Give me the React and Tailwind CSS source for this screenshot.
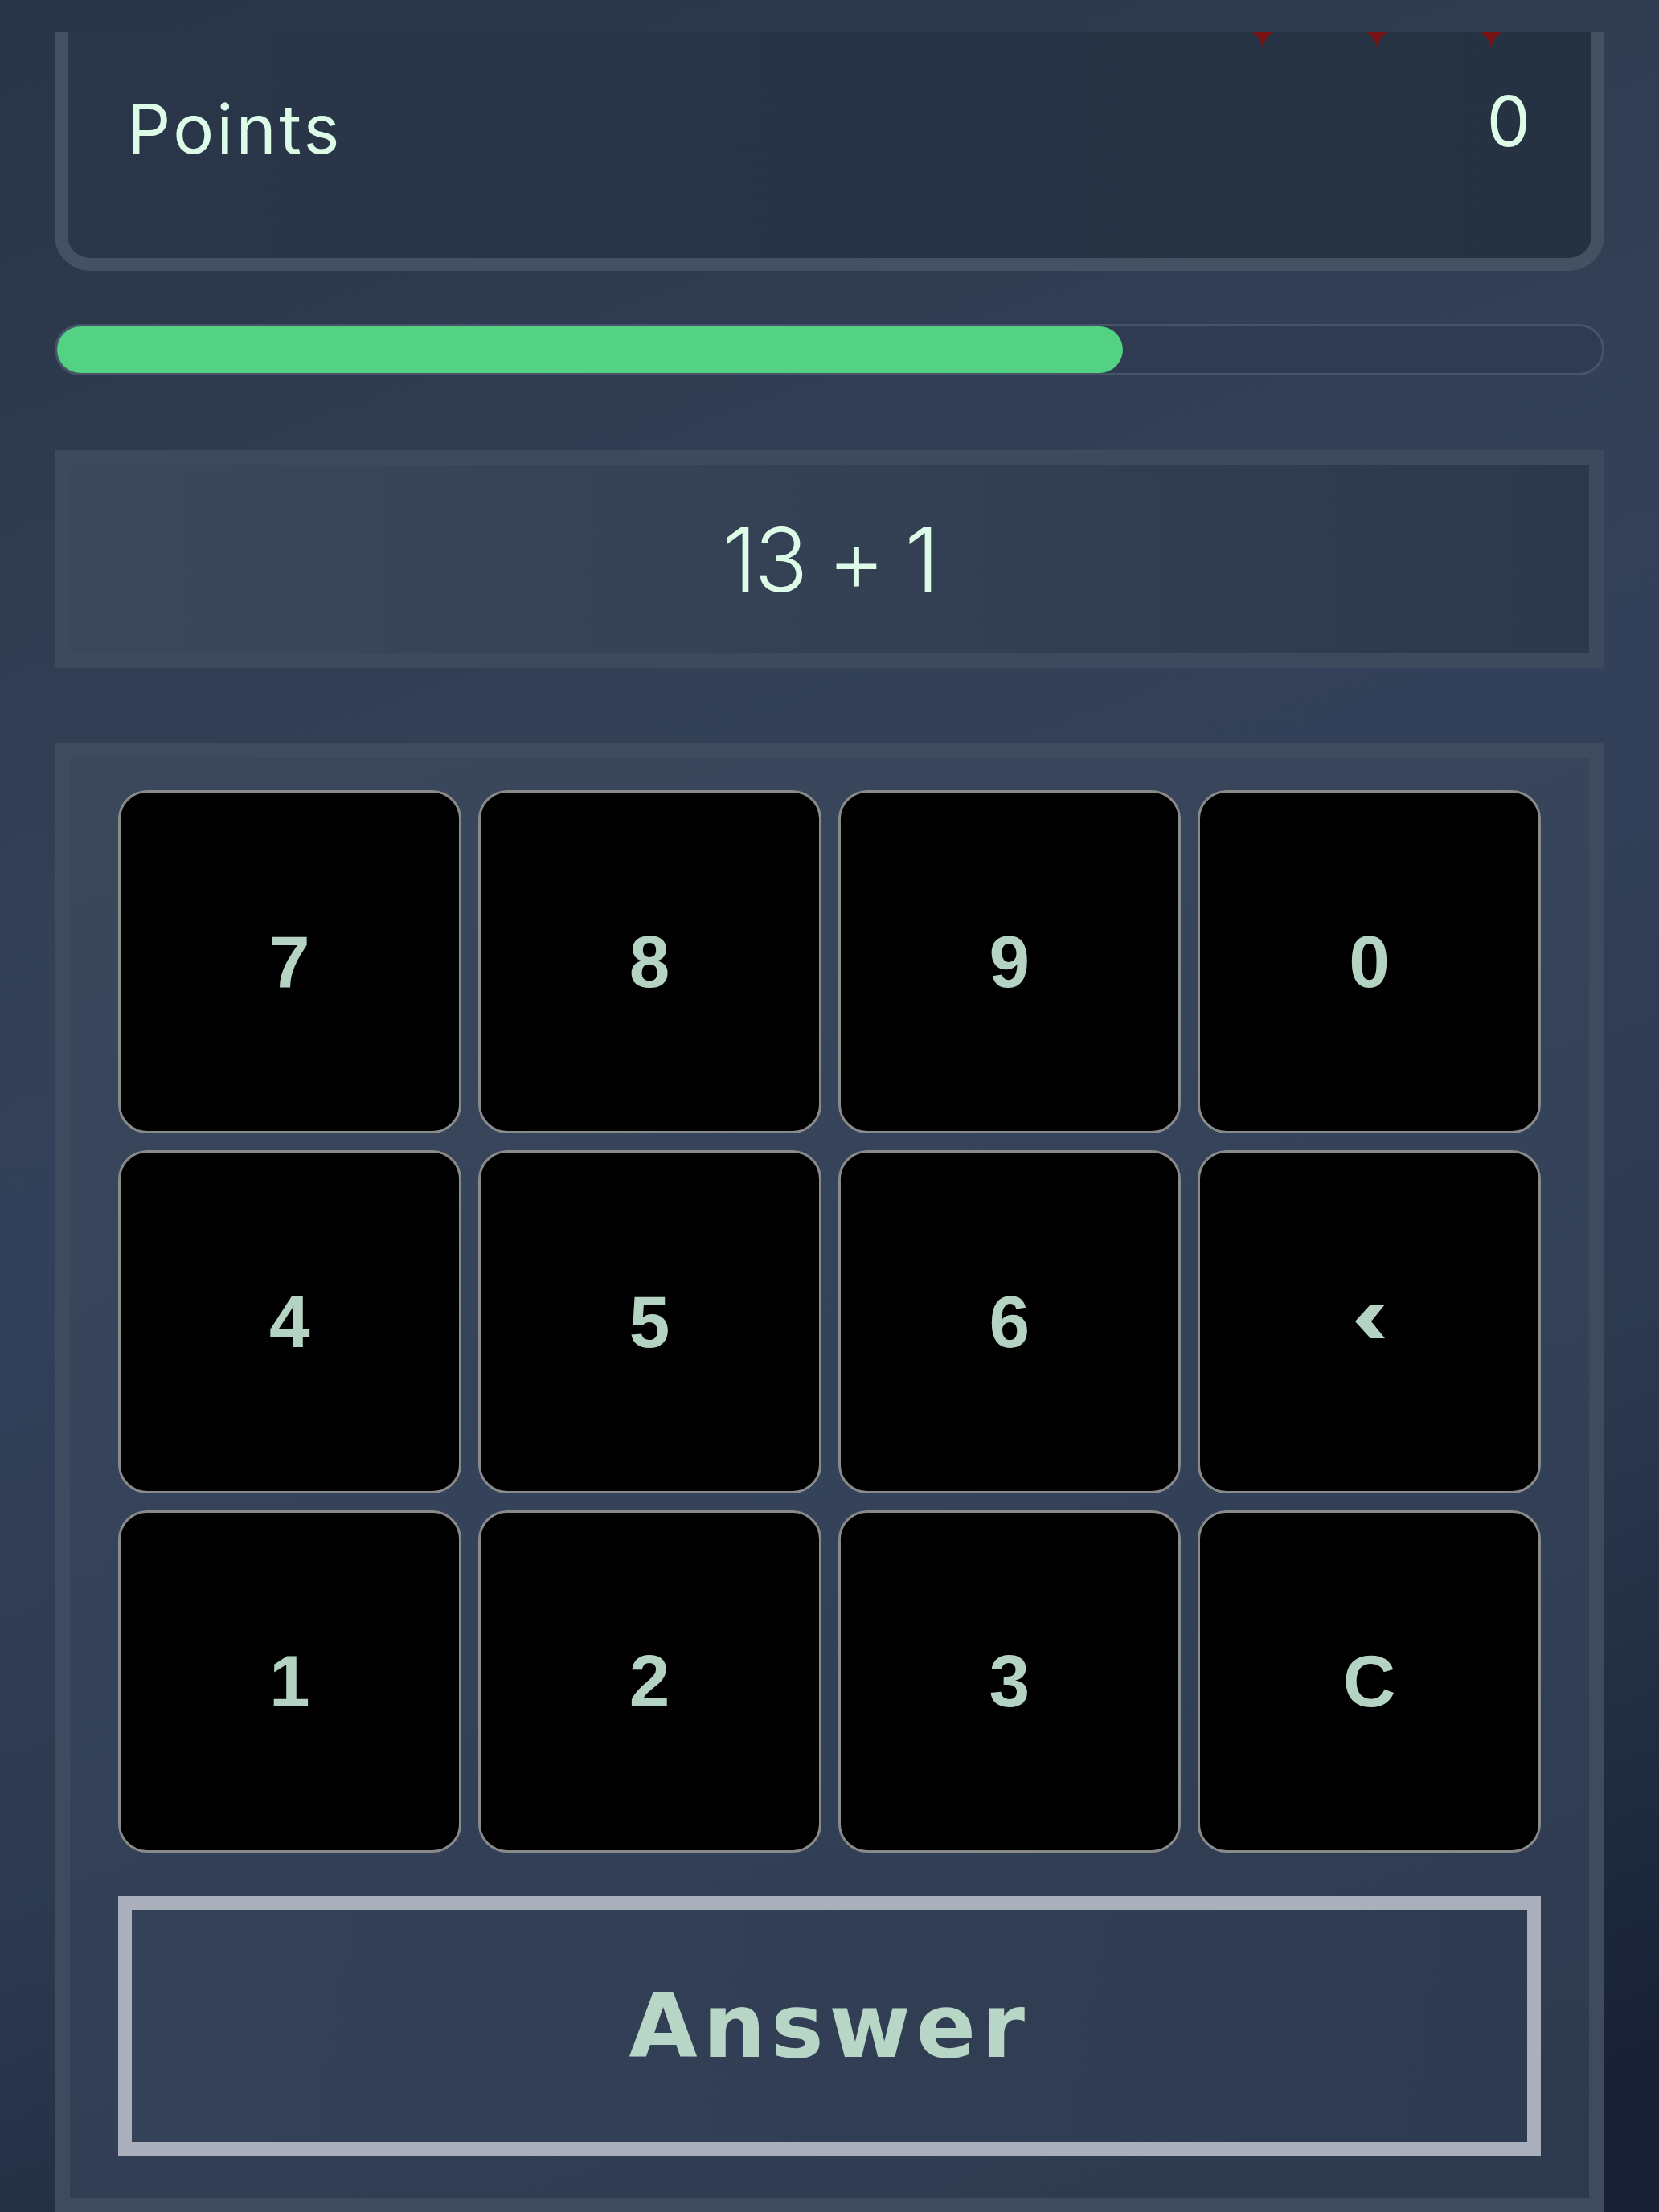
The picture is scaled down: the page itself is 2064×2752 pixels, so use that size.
import React from "react";

const keys = ["7", "8", "9", "0", "4", "5", "6", "back", "1", "2", "3", "C"];

function Tip() {
  return (
    <svg width="26" height="18" viewBox="0 0 26 18" className="block">
      <path d="M0 0 H26 Q16 6 13.5 18 H12.5 Q10 6 0 0 Z" fill="#7a1414" />
    </svg>
  );
}

function Chevron() {
  return (
    <svg width="40" height="42" viewBox="0 0 40 42" className="block">
      <polygon points="21,0 39,0 22,21 39,42 21,42 2,21" fill="#b4d3c2" />
    </svg>
  );
}

export default function App() {
  return (
    <div className="h-[2752px] w-full overflow-hidden bg-[linear-gradient(160deg,#283447_0%,#334157_35%,#33405a_45%,#2c3a50_68%,#182134_95%)] px-[68px] pt-[40px]">
      {/* Points card */}
      <div className="h-[297px] rounded-b-[44px] border-x-[16px] border-b-[16px] border-[#455163] bg-[linear-gradient(90deg,#2a3649,#263142)]">
        <div className="flex justify-end gap-[116px] pr-[112px]">
          <Tip />
          <Tip />
          <Tip />
        </div>
        <div className="mt-[60px] flex items-start justify-between pl-[74px] pr-[76px] font-['Inter',sans-serif] text-[#dcfce7]">
          <span className="text-[85px] leading-none tracking-[0.04em]">Points</span>
          <span className="-mt-[10px] text-[86px] leading-none">0</span>
        </div>
      </div>

      {/* Progress */}
      <div className="mt-[66px] h-[64px] rounded-full border-[3px] border-[#46546a] bg-[#2f3b50]">
        <div className="h-full w-[69%] rounded-full bg-[#52d282]"></div>
      </div>

      {/* Problem */}
      <div className="mt-[93px] flex h-[271px] items-center justify-center border-[19px] border-[#3d4a5e] bg-[linear-gradient(90deg,#3b485c,#2d384c)]">
        <span className="font-['Inter',sans-serif] text-[110px] font-light leading-none tracking-[-0.03em] text-[#dcfce7]">
          13 + 1
        </span>
      </div>

      {/* Keypad */}
      <div className="mt-[93px] border-[19px] border-[#3e4a5e] bg-[linear-gradient(160deg,#3b475b,#34425a_50%,#2d394d)] px-[60px] pb-[52px] pt-[40px]">
        <div className="grid grid-cols-4 gap-[21px]">
          {keys.map((k) => (
            <button
              key={k}
              className="flex aspect-square items-center justify-center rounded-[36px] border-[3px] border-[#8a8a8a] bg-black font-['Liberation_Sans',Arial,sans-serif] text-[91px] font-bold leading-none text-[#b4d3c2]"
            >
              {k === "back" ? <Chevron /> : k}
            </button>
          ))}
        </div>
        <button className="mt-[54px] flex h-[323px] w-full items-center justify-center border-[17px] border-[#a9afbb] bg-[linear-gradient(100deg,#34425a,#2e3a4f)] font-['DejaVu_Sans',sans-serif] text-[110px] font-bold leading-none tracking-[0.06em] text-[#b8d6c6]">
          Answer
        </button>
      </div>
    </div>
  );
}
